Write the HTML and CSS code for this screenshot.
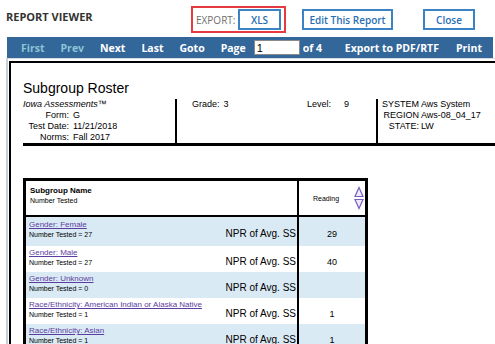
FILE: index.html
```html
<!DOCTYPE html>
<html lang="en">
<head>
  <meta charset="UTF-8" />
  <title>Report Viewer</title>
  <link rel="stylesheet" href="styles.css">
</head>
<body>

  <div class="topbar">
    <h1 class="title">REPORT VIEWER</h1>
    <div class="export-box">
      <span class="export-label">EXPORT:</span>
      <a href="#" class="btn btn-xls">XLS</a>
    </div>
    <a href="#" class="btn btn-edit">Edit This Report</a>
    <a href="#" class="btn btn-close">Close</a>
  </div>

  <nav class="pager">
    <a href="#" class="off">First</a>
    <a href="#" class="off">Prev</a>
    <a href="#">Next</a>
    <a href="#">Last</a>
    <a href="#">Goto</a>
    <span class="page-label">Page</span>
    <input class="page-input" type="text" value="1" />
    <span class="page-of">of 4</span>
    <a href="#" class="export">Export to PDF/RTF</a>
    <a href="#" class="print">Print</a>
  </nav>

  <div class="viewer">
    <div class="report">
      <h2 class="report-title">Subgroup Roster</h2>

      <div class="info">
        <div class="info-col">
          <div class="product">Iowa Assessments™</div>
          <div class="field"><span class="field-label">Form:</span><span>G</span></div>
          <div class="field"><span class="field-label">Test Date:</span><span>11/21/2018</span></div>
          <div class="field"><span class="field-label">Norms:</span><span>Fall 2017</span></div>
        </div>
        <div class="info-col info-mid">
          <div class="field"><span class="grade-label">Grade:</span><span>3</span></div>
          <div class="field"><span class="level-label">Level:</span><span>9</span></div>
        </div>
        <div class="info-col info-right">
          <div class="field"><span class="field-label narrow">SYSTEM</span><span>Aws System</span></div>
          <div class="field"><span class="field-label narrow">REGION</span><span>Aws-08_04_17</span></div>
          <div class="field"><span class="field-label narrow">STATE:</span><span>LW</span></div>
        </div>
      </div>

      <div class="roster">
        <div class="roster-head">
          <div class="head-name">
            <div class="head-title">Subgroup Name</div>
            <div class="head-sub">Number Tested</div>
          </div>
          <div class="head-score">
            <span>Reading</span>
            <svg class="sort" width="10" height="24" viewBox="0 0 10 24">
              <path d="M5 1.5 L9 10.5 L1 10.5 Z" fill="#efeafa" stroke="#7a5fc0" stroke-width="1.2"/>
              <path d="M1 13.5 L9 13.5 L5 22.5 Z" fill="#efeafa" stroke="#7a5fc0" stroke-width="1.2"/>
            </svg>
          </div>
        </div>

        <div class="roster-row alt first">
          <div class="cell-name">
            <div><a href="#" class="group-link">Gender: Female</a><div class="group-n">Number Tested = 27</div></div>
            <span class="npr">NPR of Avg. SS</span>
          </div>
          <div class="cell-score">29</div>
        </div>
        <div class="roster-row">
          <div class="cell-name">
            <div><a href="#" class="group-link">Gender: Male</a><div class="group-n">Number Tested = 27</div></div>
            <span class="npr">NPR of Avg. SS</span>
          </div>
          <div class="cell-score">40</div>
        </div>
        <div class="roster-row alt">
          <div class="cell-name">
            <div><a href="#" class="group-link">Gender: Unknown</a><div class="group-n">Number Tested = 0</div></div>
            <span class="npr">NPR of Avg. SS</span>
          </div>
          <div class="cell-score"></div>
        </div>
        <div class="roster-row">
          <div class="cell-name">
            <div><a href="#" class="group-link">Race/Ethnicity: American Indian or Alaska Native</a><div class="group-n">Number Tested = 1</div></div>
            <span class="npr">NPR of Avg. SS</span>
          </div>
          <div class="cell-score">1</div>
        </div>
        <div class="roster-row alt">
          <div class="cell-name">
            <div><a href="#" class="group-link">Race/Ethnicity: Asian</a><div class="group-n">Number Tested = 1</div></div>
            <span class="npr">NPR of Avg. SS</span>
          </div>
          <div class="cell-score">1</div>
        </div>
      </div>
    </div>
  </div>

</body>
</html>
```

FILE: styles.css
```css
* {
  box-sizing: border-box;
}
body {
  margin: 0;
  font-family: "Liberation Sans", Arial, sans-serif;
  color: #000;
  background: #fff;
  overflow: hidden;
}

/* top bar */
.topbar {
  display: flex;
  align-items: flex-start;
  height: 37px;
  padding-left: 6px;
  font-family: "Open Sans", sans-serif;
}
.title {
  margin: 9px 0 0;
  width: 185px;
  font-size: 11px;
  line-height: 15px;
  font-weight: 700;
  color: #333;
}
.export-box {
  margin-top: 6px;
  width: 95px;
  height: 27px;
  border: 2px solid #e53a3f;
  display: flex;
  align-items: center;
  justify-content: space-between;
  padding: 0 3px;
}
.export-label {
  font-size: 10px;
  color: #6f6f6f;
}
.btn {
  display: flex;
  align-items: center;
  justify-content: center;
  height: 21px;
  border: 2px solid #3b83c3;
  background: #fff;
  color: #2a6fb3;
  font-size: 10px;
  font-weight: 600;
  text-decoration: none;
}
.btn-xls { width: 43px; }
.btn-edit { margin: 9px 0 0 16px; width: 91px; }
.btn-close { margin: 9px 0 0 30px; width: 52px; }

/* pager */
.pager {
  display: flex;
  align-items: center;
  height: 21px;
  margin: 0 2px 0 7px;
  padding: 0 11px 0 14px;
  background: #336699;
  font-family: "Open Sans", sans-serif;
  font-size: 10.5px;
  font-weight: 700;
  color: #fff;
}
.pager a {
  color: #fff;
  text-decoration: none;
  margin-right: 16px;
}
.pager a.off { color: #8cc4d6; }
.page-label { margin-right: 8px; }
.page-input {
  width: 46px;
  height: 15px;
  border: 1px solid #8a8a8a;
  padding: 0 2px;
  font: 11px "Liberation Sans", Arial, sans-serif;
}
.page-of { margin-left: 3px; }
.pager a.export { margin-left: auto; margin-right: 17px; }
.pager a.print { margin-right: 0; }

/* report area */
.viewer {
  margin-left: 6px;
  height: calc(100vh - 58px);
  border-left: 2px solid #c8cfda;
  border-top: 1px solid #d5d9e0;
  padding: 2px 0 0 1px;
  overflow: hidden;
}
.report {
  width: 600px;
  border-top: 2px solid #000;
  border-left: 2px solid #000;
  padding: 17px 0 0 12px;
}
.report-title {
  margin: 0 0 3px;
  font-size: 14px;
  line-height: 16px;
  font-weight: normal;
}

.info {
  display: grid;
  grid-template-columns: 152px 201px 1fr;
  border-bottom: 3px solid #000;
  font-size: 9px;
  line-height: 11px;
}
.info-col + .info-col { border-left: 2px solid #000; }
.info-col { height: 44px; }
.product { font-style: italic; }
.field { display: flex; }
.field-label {
  width: 46px;
  margin-right: 4px;
  text-align: right;
}
.field-label.narrow { width: 40px; margin-right: 2px; }
.info-mid {
  display: flex;
  padding-left: 15px;
  align-items: flex-start;
}
.info-mid .field:first-child { width: 115px; }
.grade-label { margin-right: 4px; }
.level-label { margin-right: 13px; }
.info-right { padding-left: 1px; }

/* roster table */
.roster {
  margin-top: 32px;
  width: 345px;
  border: 3px solid #000;
  border-bottom: none;
}
.roster-head,
.roster-row {
  display: grid;
  grid-template-columns: 271px 68px;
}
.roster-head {
  height: 36px;
  border-bottom: 2px solid #000;
}
.head-name { padding: 5px 0 0 4px; }
.head-title {
  font-size: 8px;
  line-height: 10px;
  font-weight: bold;
}
.head-sub {
  font-size: 7px;
  line-height: 10px;
}
.head-score {
  display: flex;
  align-items: center;
  justify-content: space-between;
  padding: 0 1px 0 14px;
  border-left: 2px solid #000;
  font-size: 7px;
}
.sort { display: block; }

.roster-row { height: 26px; }
.roster-row.alt { background: #daeaf5; }
.roster-row.first { height: 29px; }
.cell-name {
  display: flex;
  align-items: flex-end;
  justify-content: space-between;
  padding: 1px 1px 5px 3px;
}
.cell-score {
  display: flex;
  align-items: flex-end;
  justify-content: center;
  padding-bottom: 5px;
  border-left: 2px solid #000;
  font-size: 9px;
  line-height: 10px;
}
.first .cell-name,
.first .cell-score { padding-bottom: 7px; }
.group-link {
  display: block;
  font-size: 8px;
  line-height: 11px;
  color: #5b3d9f;
}
.group-n {
  font-size: 7px;
  line-height: 9px;
}
.npr {
  font-size: 10px;
  line-height: 10px;
}
```
